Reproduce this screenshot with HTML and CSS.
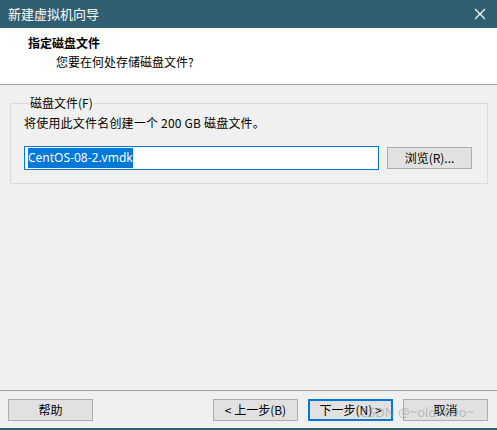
FILE: index.html
```html
<!DOCTYPE html>
<html lang="zh-CN">
<head>
<meta charset="utf-8">
<title>新建虚拟机向导</title>
<link rel="stylesheet" href="styles.css">
</head>
<body>
<div class="window">
  <div class="titlebar">
    <span class="title">新建虚拟机向导</span>
    <svg class="close" width="12" height="12" viewBox="0 0 12 12"><path d="M1 1L11 11M11 1L1 11" stroke="#fff" stroke-width="1.2" fill="none"/></svg>
  </div>
  <div class="header">
    <div class="h-title">指定磁盘文件</div>
    <div class="h-sub">您要在何处存储磁盘文件?</div>
  </div>
  <div class="content">
    <fieldset class="group">
      <legend class="legend">磁盘文件(F)</legend>
      <div class="desc">将使用此文件名创建一个 200 GB 磁盘文件。</div>
      <div class="row">
        <div class="input"><span class="sel">CentOS-08-2.vmdk</span></div>
        <button class="btn browse">浏览(R)...</button>
      </div>
    </fieldset>
  </div>
  <div class="footer">
    <button class="btn">帮助</button>
    <div class="spacer"></div>
    <button class="btn">&lt; 上一步(B)</button>
    <button class="btn primary">下一步(N) &gt;</button>
    <button class="btn">取消</button>
    <span class="watermark">CSDN @~old~two~</span>
  </div>
</div>
</body>
</html>
```

FILE: styles.css
```css
* { box-sizing: border-box; }
html, body { margin: 0; padding: 0; }
body {
  width: 497px;
  height: 430px;
  overflow: hidden;
  font-family: "Noto Sans CJK SC", "Noto Sans", sans-serif;
  font-size: 12px;
  color: #000;
  background: #f0f0f0;
}
.window {
  width: 497px;
  height: 430px;
  display: flex;
  flex-direction: column;
  border-bottom: 2px solid #305f72;
}
.titlebar {
  height: 28px;
  background: #305f72;
  display: flex;
  align-items: center;
  justify-content: space-between;
  padding: 0 11px 0 8px;
  color: #fff;
}
.title { font-size: 13px; line-height: 16px; }
.header {
  height: 57px;
  background: #fff;
  border-bottom: 1px solid #a0a0a0;
  padding: 7px 0 0 28px;
}
.h-title { font-weight: bold; font-size: 12px; line-height: 16px; }
.h-sub { margin-left: 28px; margin-top: 3px; line-height: 16px; }
.content {
  flex: 1;
  padding: 10px 10px 0 10px;
}
.group {
  margin: 0;
  border: 1px solid #dcdcdc;
  padding: 5px 15px 13px 13px;
}
.legend {
  padding: 0 1px;
  margin-left: 5px;
  line-height: 16px;
}
.desc { line-height: 16px; margin-top: -1px; letter-spacing: 0.2px; }
.row {
  display: flex;
  align-items: center;
  margin-top: 15px;
}
.input {
  width: 355px;
  height: 24px;
  background: #fff;
  border: 1px solid #0078d7;
  padding: 2px 0 0 3px;
  line-height: 17px;
  font-family: "Noto Sans", sans-serif;
  font-size: 12px;
}
.sel { background: #0078d7; color: #fff; padding: 1px 0 2px 0; }
.btn {
  height: 22px;
  width: 85px;
  background: #e1e1e1;
  border: 1px solid #adadad;
  font-family: "Noto Sans CJK SC", "Noto Sans", sans-serif;
  font-size: 12px;
  color: #000;
  padding: 0;
  line-height: 18px;
}
.browse { margin-left: 8px; }
.footer {
  position: relative;
  height: 38px;
  border-top: 1px solid #a0a0a0;
  display: flex;
  align-items: flex-start;
  padding: 8px 9px 0 8px;
  gap: 10px;
}
.spacer { flex: 1; }
.primary { border: 2px solid #0078d7; line-height: 16px; }
.watermark {
  position: absolute;
  left: 360px;
  top: 12px;
  font-family: "Noto Sans", sans-serif;
  font-size: 13px;
  color: rgba(150,150,150,0.55);
  pointer-events: none;
}
```
